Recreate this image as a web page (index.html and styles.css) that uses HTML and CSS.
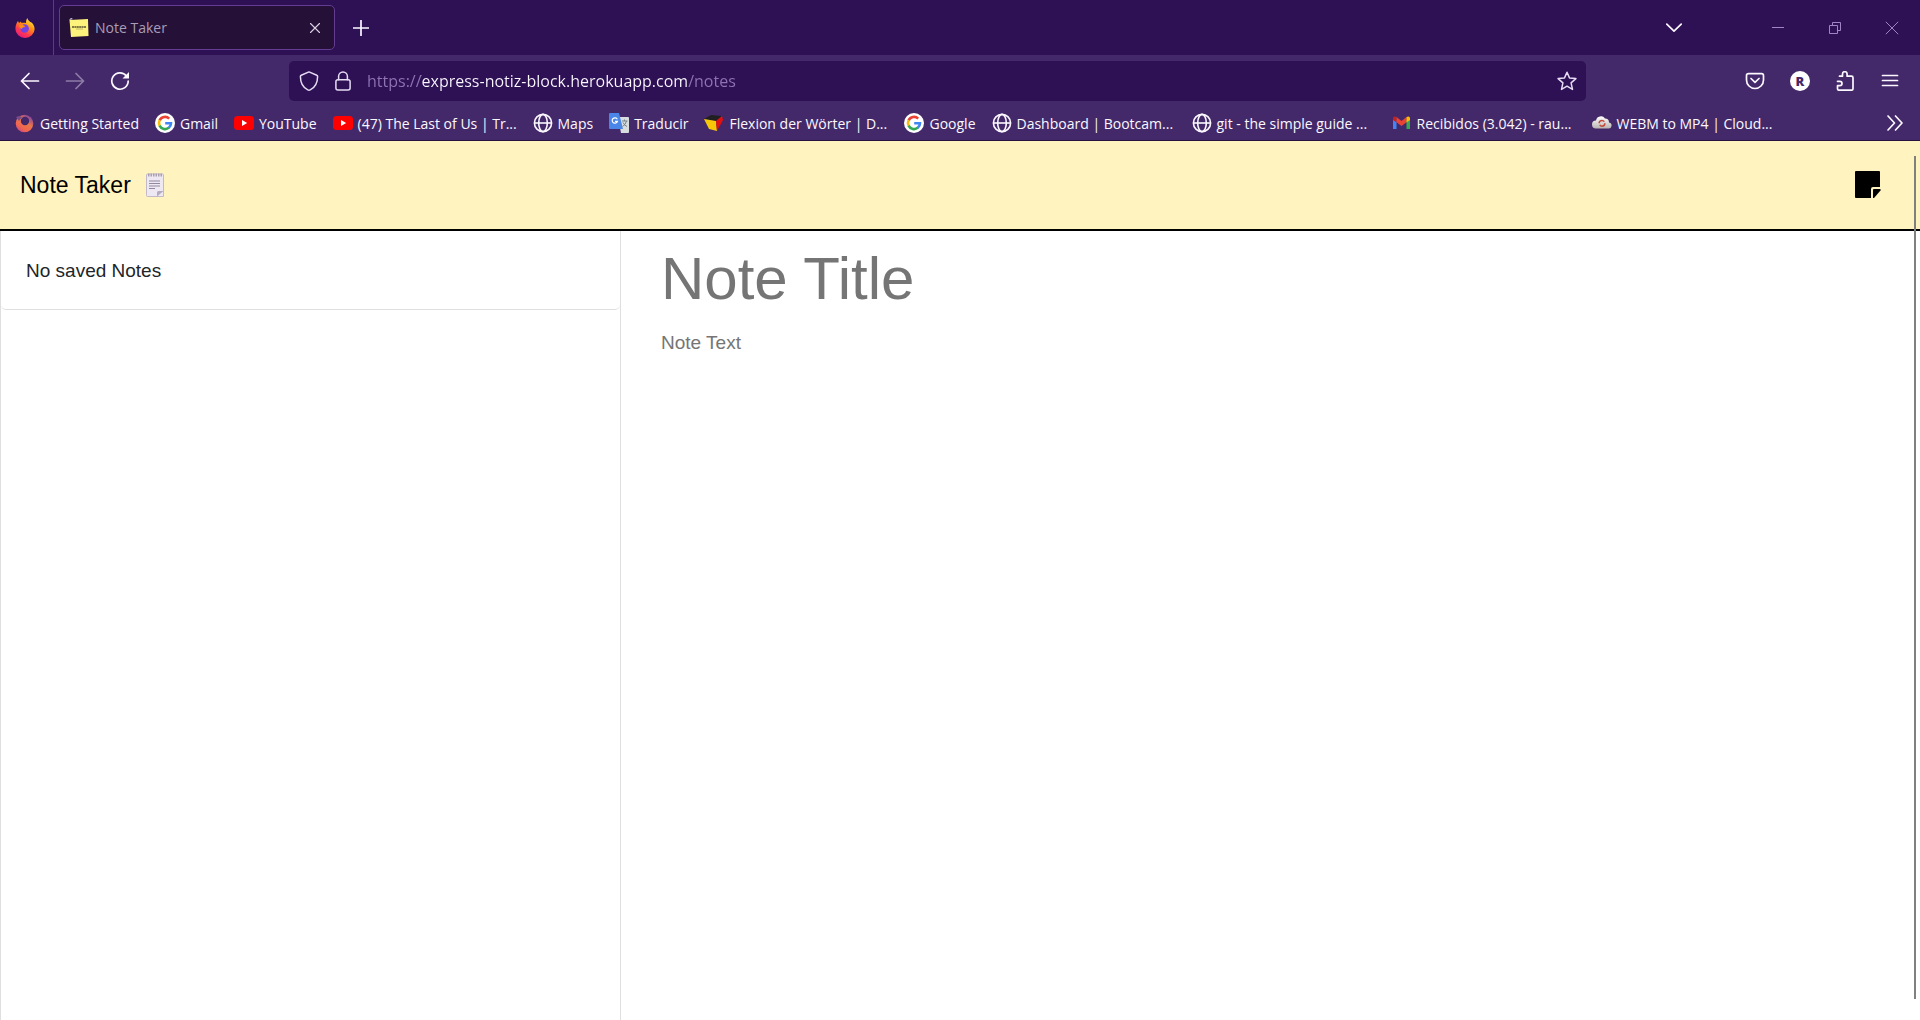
FILE: index.html
```html
<!DOCTYPE html>
<html lang="en">
<head>
<meta charset="utf-8">
<title>Note Taker</title>
<link rel="stylesheet" href="styles.css">
</head>
<body>
<svg class="defs" aria-hidden="true">
  <defs>
    <linearGradient id="fire" x1=".8" y1="0" x2=".2" y2="1"><stop offset="0" stop-color="#fff44f"/><stop offset=".35" stop-color="#ff980e"/><stop offset=".7" stop-color="#ff3750"/><stop offset="1" stop-color="#e31587"/></linearGradient>
    <linearGradient id="dusk" x1=".9" y1="0" x2=".2" y2="1"><stop offset="0" stop-color="#6a35b8"/><stop offset=".45" stop-color="#e8774a"/><stop offset=".75" stop-color="#f2654f"/><stop offset="1" stop-color="#c24a86"/></linearGradient>
    <linearGradient id="cloud" x1="0" y1="0" x2="0" y2="1"><stop offset="0" stop-color="#fff"/><stop offset="1" stop-color="#b9b4b0"/></linearGradient>
    <symbol id="globe" viewBox="0 0 20 20"><g fill="none" stroke="#fbf8ff" stroke-width="1.6"><circle cx="10" cy="10" r="8.6"/><ellipse cx="10" cy="10" rx="4.3" ry="8.6"/><path d="M1.5 10h17"/></g></symbol>
    <symbol id="google" viewBox="0 0 20 20"><circle cx="10" cy="10" r="10" fill="#fff"/><g fill="none" stroke-width="2.6"><path d="M14.2 5.6A6 6 0 0 0 4.6 7.4" stroke="#ea4335"/><path d="M4.7 7.2a6 6 0 0 0 0 5.6" stroke="#fbbc05"/><path d="M4.6 12.6a6 6 0 0 0 9.4 2" stroke="#34a853"/><path d="M13.8 14.8A6 6 0 0 0 16 10.2h-5.8" stroke="#4285f4"/></g></symbol>
    <symbol id="youtube" viewBox="0 0 20 20"><rect y="3" width="20" height="14" rx="3.5" fill="#f00"/><path d="M8 7l5.2 3L8 13z" fill="#fff"/></symbol>
  </defs>
</svg>

<header class="browser">
  <div class="tabs">
    <div class="firefox">
      <svg width="20" height="20" viewBox="0 0 20 20"><path d="M12.3 0c.4 1.800 1.600 2.600 2.900 4C17.400 4.600 19.600 7.500 19.600 11a9.600 9 0 0 1-19.200 0C.4 7.500 1.500 5 3 3l1 2 2-1.500L6.500 5C8 4.500 10 4.500 11 5c0-2 .3-3.500 1.300-5z" fill="url(#fire)"/><circle cx="9.600" cy="10.500" r="4.300" fill="#7543e5"/><path d="M4 7.500c2.500-1.500 4-.5 6.500.8-1.500 1.200-3 .7-3.500 2.200C6 11.500 5 10 4 7.500z" fill="#ff8a16"/></svg>
    </div>
    <div class="tab">
      <svg width="20" height="20" viewBox="0 0 20 20"><path d="M0 2l2-2 2 1z" fill="#e9dff5"/><path d="M.5 2L19 1l.5 17L2 19z" fill="#fdf27c"/><path d="M3 9h14" stroke="#5a5330" stroke-width="1.600" stroke-dasharray="2 .4"/><path d="M7 11h7" stroke="#b5aa60" stroke-width=".8"/></svg>
      <span class="tab-title">Note Taker</span>
      <button class="icon-button" aria-label="Close tab"><svg width="12" height="12" viewBox="0 0 12 12"><path d="M1.500 1.500l9 9m0-9l-9 9" class="line thin"/></svg></button>
    </div>
    <button class="icon-button new-tab" aria-label="New tab"><svg width="16" height="16" viewBox="0 0 16 16"><path d="M8 .5v15M.5 8h15" class="line"/></svg></button>
    <div class="window-controls">
      <button class="icon-button all-tabs" aria-label="List all tabs"><svg width="16" height="10" viewBox="0 0 16 10"><path d="M.8 1.200L8 8.200l7.200-7" class="line"/></svg></button>
      <button class="icon-button" aria-label="Minimize"><svg width="14" height="14" viewBox="0 0 14 14"><path d="M1 6.500h12" class="faint"/></svg></button>
      <button class="icon-button" aria-label="Restore"><svg width="14" height="14" viewBox="0 0 14 14"><path d="M1.500 4.500h8v8h-8zM4.500 4.500v-3h8v8h-3" class="faint"/></svg></button>
      <button class="icon-button" aria-label="Close"><svg width="14" height="14" viewBox="0 0 14 14"><path d="M.8.800l12.400 12.400m0-12.400L.8 13.200" class="faint"/></svg></button>
    </div>
  </div>

  <div class="toolbar">
    <div class="history">
      <button class="icon-button" aria-label="Back"><svg width="20" height="20" viewBox="0 0 20 20"><path d="M18.500 10h-17M9 2.500L1.500 10 9 17.500" class="line"/></svg></button>
      <button class="icon-button disabled" aria-label="Forward" disabled><svg width="20" height="20" viewBox="0 0 20 20"><path d="M1.500 10h17M11 2.500l7.500 7.500-7.500 7.500" class="line"/></svg></button>
      <button class="icon-button" aria-label="Reload"><svg width="20" height="20" viewBox="0 0 20 20"><path d="M16.500 5A8.200 8.200 0 1 0 18.200 10" class="line"/><path d="M19 1v6.500h-6.500z" fill="#fbf8ff"/></svg></button>
    </div>
    <div class="address">
      <svg width="20" height="20" viewBox="0 0 20 20"><path d="M10 .9l7.800 3.300q.8.300.8 1.200c0 6-2.600 11-7.400 13.500q-1.200.6-2.400 0C4 16.400 1.400 11.400 1.400 5.400q0-.9.8-1.200z" class="line light"/></svg>
      <svg width="20" height="20" viewBox="0 0 20 20"><rect x="2.900" y="8.800" width="14.200" height="10.300" rx="2" class="line light"/><path d="M5.600 8.800V5.300a4.400 4.400 0 0 1 8.800 0v3.500" class="line light"/></svg>
      <input class="url" type="text" aria-label="Address" value="https://express-notiz-block.herokuapp.com/notes">
      <button class="icon-button" aria-label="Bookmark this page"><svg width="20" height="20" viewBox="0 0 20 20"><path d="M10 1.200l2.500 5.700 6.400.7-4.800 4.300 1.400 6.500L10 15.200l-5.500 3.200 1.400-6.500L1.100 7.600l6.400-.7z" class="line light"/></svg></button>
    </div>
    <div class="actions">
      <button class="icon-button" aria-label="Pocket"><svg width="20" height="20" viewBox="0 0 20 20"><path d="M3.500 2.700h13q2 0 2 2V9A8.500 8.500 0 0 1 1.500 9V4.700q0-2 2-2z" class="line"/><path d="M6 7.500l4 3.800 4-3.800" class="line"/></svg></button>
      <button class="account" aria-label="Account">R</button>
      <button class="icon-button" aria-label="Extensions"><svg width="20" height="20" viewBox="0 0 20 20"><path d="M4.500 5.200h3V3a2.300 2.300 0 0 1 4.600 0v2.200h4.400q1.500 0 1.500 1.500v11q0 1.500-1.500 1.500H4q-1.500 0-1.500-1.500v-3h2.300a2.200 2.200 0 0 0 0-4.400H2.500" class="line"/></svg></button>
      <button class="icon-button" aria-label="Menu"><svg width="20" height="20" viewBox="0 0 20 20"><path d="M2.500 4.500h15M2.500 9.500h15M2.500 14.500h15" class="line"/></svg></button>
    </div>
  </div>

  <nav class="bookmarks" aria-label="Bookmarks">
    <a href="#"><svg viewBox="0 0 20 20"><circle cx="9.500" cy="10.500" r="8.800" fill="url(#dusk)"/><circle cx="10" cy="8" r="4.200" fill="#43286a"/><path d="M1 4l3-1 3 1-3 4z" fill="#7a4a86"/></svg><span>Getting Started</span></a>
    <a href="#"><svg><use href="#google"/></svg><span>Gmail</span></a>
    <a href="#"><svg><use href="#youtube"/></svg><span>YouTube</span></a>
    <a href="#" class="long"><svg><use href="#youtube"/></svg><span>(47) The Last of Us | Tr...</span></a>
    <a href="#"><svg><use href="#globe"/></svg><span>Maps</span></a>
    <a href="#"><svg viewBox="0 0 20 20"><path d="M9 4h10q1 0 1 1v14q0 1-1 1H12z" fill="#d8dcdf"/><path d="M1 0h9l4 16H1q-1 0-1-1V1q0-1 1-1z" fill="#4a86e8"/><path d="M8.300 6.200A2.700 2.700 0 1 0 8.500 8.300H6" fill="none" stroke="#fff" stroke-width="1.200"/><path d="M13 8h5.500M15.500 6.500V8M17.500 8q-1 4-4 5.500M14 9.500q1.500 3 4 4" fill="none" stroke="#71858c"/></svg><span>Traducir</span></a>
    <a href="#" class="long"><svg viewBox="0 0 20 20"><path d="M0 6l7-4 11 1-6 5z" fill="#202022"/><path d="M0 6l12 2 1 10-8-2z" fill="#f7c808"/><path d="M12 8l6-5 1 4-6 11z" fill="#e01010"/></svg><span>Flexion der Wörter | D...</span></a>
    <a href="#"><svg><use href="#google"/></svg><span>Google</span></a>
    <a href="#" class="long"><svg><use href="#globe"/></svg><span>Dashboard | Bootcam...</span></a>
    <a href="#" class="long"><svg><use href="#globe"/></svg><span>git - the simple guide ...</span></a>
    <a href="#" class="long"><svg viewBox="0 0 20 20"><path d="M1 5v11h3.500V7z" fill="#4285f4"/><path d="M14.500 7v9H18V5z" fill="#34a853"/><path d="M1 5.500q0-3 3.500-1.500v5.500L1 7z" fill="#c5221f"/><path d="M4.500 4l5 4 5-4v5.200l-5 3.800-5-3.800z" fill="#ea4335"/><path d="M14.500 4Q18 2.500 18 5.500V7l-3.500 2.500z" fill="#fbbc04"/></svg><span>Recibidos (3.042) - rau...</span></a>
    <a href="#" class="long"><svg viewBox="0 0 20 20"><path d="M4 15.500a4 4 0 0 1 0-8 5 5 0 0 1 9-2 4 4 0 0 1 4 4 3 3 0 0 1-1 6z" fill="url(#cloud)"/><circle cx="10" cy="10.300" r="2.900" fill="none" stroke="#c24a3c" stroke-width="1.500" stroke-dasharray="7 2"/></svg><span>WEBM to MP4 | Cloud...</span></a>
    <button class="icon-button overflow" aria-label="More bookmarks"><svg viewBox="0 0 20 20"><path d="M3 3l6.500 7L3 17M10.500 3l6.500 7-6.500 7" class="line"/></svg></button>
  </nav>
</header>

<header class="app-bar">
  <a href="#" class="brand">Note Taker
    <svg width="18" height="24" viewBox="0 0 18 24"><path d="M1.500 1h15q1 0 1 1v21.500h-16q-1 0-1-1V2q0-1 1-1z" fill="#eee8f3" stroke="#c3bac9"/><path d="M2 2h14" stroke="#aaa0b0" stroke-width="3" stroke-dasharray="1.500 1"/><path d="M3 8h11M3 10.500h11M3 13h11M3 15.500h6" stroke="#9188a0"/><path d="M11 23.500v-4q0-1.500 1.500-1.500h5z" fill="#b5abc0"/></svg>
  </a>
  <button class="icon-button" aria-label="New note"><svg width="28" height="28" viewBox="0 0 28 28"><path d="M2 0h23q1 0 1 1v15h-7q-2 0-2 2v9H2q-1 0-1-1V1q0-1 1-1z"/><path d="M19 27v-8q0-1 1-1h6.500v1.500L20 27z"/></svg></button>
</header>

<main class="notes">
  <aside class="list">
    <ul><li>No saved Notes</li></ul>
  </aside>
  <form class="editor">
    <input class="note-title" type="text" placeholder="Note Title" aria-label="Note title">
    <textarea class="note-text" placeholder="Note Text" aria-label="Note text"></textarea>
  </form>
</main>
<div class="scroll-thumb"></div>
</body>
</html>
```
FILE: styles.css
```css
* { box-sizing: border-box; }

body {
  display: flex;
  flex-direction: column;
  min-height: 100vh;
  margin: 0;
  background: #fff;
  color: #212529;
  font-family: "Liberation Sans", Arial, sans-serif;
  font-size: 19px;
}

svg { display: block; flex: none; }
.defs { position: absolute; width: 0; height: 0; }
a { color: inherit; text-decoration: none; }

.icon-button {
  display: flex;
  padding: 0;
  border: 0;
  background: none;
  color: inherit;
}

.line {
  fill: none;
  stroke: #fbf8ff;
  stroke-width: 1.7;
  stroke-linecap: round;
  stroke-linejoin: round;
}
.light { stroke: #e6dcf3; stroke-width: 1.5; }
.thin { stroke-width: 1.1; stroke: #dcd2e6; }
.faint { fill: none; stroke: #a184c4; }
.disabled { opacity: .4; }

/* Browser chrome */
.browser {
  background: #44296a;
  color: #fbf8ff;
  font-family: "Open Sans", "Noto Sans", sans-serif;
  font-size: 14px;
  border-bottom: 1px solid #2a1240;
}

.tabs {
  display: flex;
  align-items: center;
  height: 55px;
  padding-right: 21px;
  background: #2e1055;
}
.firefox {
  display: flex;
  align-items: center;
  height: 100%;
  padding: 0 18px 0 15px;
  border-right: 1px solid #593d80;
  margin-right: 5px;
}
.tab {
  display: flex;
  align-items: center;
  gap: 6px;
  width: 276px;
  height: 45px;
  padding: 0 13px 0 9px;
  border: 1px solid #643c91;
  border-radius: 5px;
  background: #251138;
}
.tab-title { flex: 1; color: #a99db5; }
.new-tab { margin-left: 18px; }
.window-controls {
  display: flex;
  align-items: center;
  gap: 43px;
  margin-left: auto;
}
.all-tabs { margin-right: 46px; }

.toolbar {
  display: flex;
  align-items: center;
  height: 51px;
  padding: 0 20px;
}
.history { display: flex; gap: 25px; width: 269px; }
.address {
  display: flex;
  flex: 1;
  align-items: center;
  gap: 14px;
  height: 40px;
  padding: 0 9px 0 10px;
  border-radius: 5px;
  background: #2e1055;
}
.url {
  flex: 1;
  padding: 0;
  border: 0;
  outline: 0;
  background: linear-gradient(90deg, #8f74b2 54px, #fbf8ff 54px, #fbf8ff 320px, #8f74b2 320px);
  background-clip: text;
  -webkit-background-clip: text;
  color: transparent;
  font: 16px/24px "Open Sans", "Noto Sans", sans-serif;
}
.actions {
  display: flex;
  align-items: center;
  gap: 25px;
  margin-left: 159px;
}
.account {
  width: 20px;
  height: 20px;
  padding: 0;
  border: 0;
  border-radius: 50%;
  background: #fff;
  color: #44296a;
  font: 800 13px/20px "Open Sans", sans-serif;
}

.bookmarks {
  display: flex;
  align-items: center;
  gap: 16px;
  height: 34px;
  padding: 0 15px 0 15px;
}
.bookmarks a { display: flex; align-items: center; gap: 5px; white-space: nowrap; }
.bookmarks svg { width: 20px; height: 20px; }
.bookmarks .long { width: 184px; }
.overflow { margin-left: auto; }

/* Note taker page */
.app-bar {
  display: flex;
  align-items: center;
  justify-content: space-between;
  height: 90px;
  padding: 0 38px 0 20px;
  border-bottom: 2px solid #000;
  background: #fff4bf;
  color: #000;
}
.brand { display: flex; align-items: center; gap: 15px; font-size: 23px; }

.notes { display: flex; flex: 1; }
.list {
  width: 621px;
  border: solid #dfdfdf;
  border-width: 0 1px;
}
.list ul {
  margin: 0;
  padding: 0;
  border-bottom: 1px solid #dfdfdf;
  border-radius: 0 0 5px 5px;
  list-style: none;
}
.list li { padding: 28px 25px 27px; line-height: 23px; }

.editor {
  display: flex;
  flex: 1;
  flex-direction: column;
  gap: 15px;
  padding: 11px 40px;
}
.editor input, .editor textarea {
  width: 100%;
  padding: 0;
  border: 0;
  outline: 0;
  background: none;
  font-family: inherit;
}
.note-title { height: 72px; font-size: 60px; }
.note-text { flex: 1; font-size: 19px; line-height: 28px; resize: none; }
.editor ::placeholder { color: #757575; }

.scroll-thumb {
  position: absolute;
  top: 156px;
  right: 4px;
  bottom: 21px;
  width: 2px;
  background: #808080;
}
```
